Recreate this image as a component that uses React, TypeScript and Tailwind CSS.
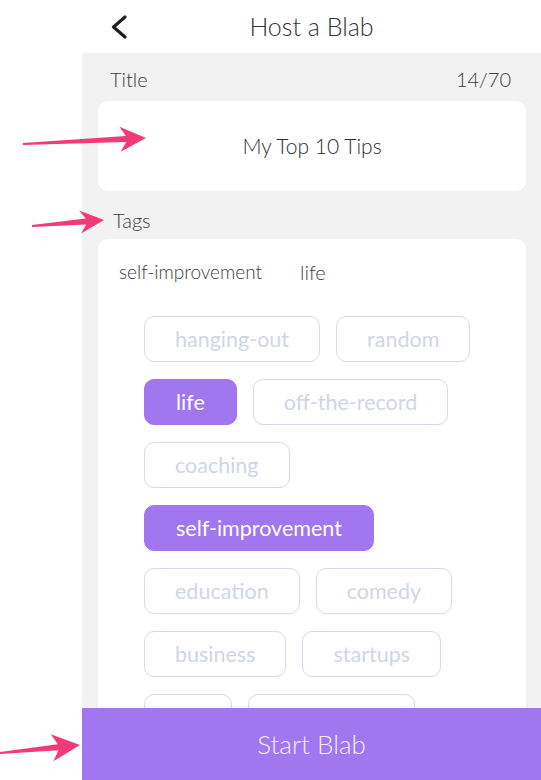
import React from 'react';

const tags = [
  { name: 'hanging-out' },
  { name: 'random' },
  { name: 'life', active: true },
  { name: 'off-the-record' },
  { name: 'coaching' },
  { name: 'self-improvement', active: true },
  { name: 'education' },
  { name: 'comedy' },
  { name: 'business' },
  { name: 'startups' },
  { name: 'art' },
  { name: 'technology' },
];

function Arrows() {
  // pink annotation arrows laid over the screenshot
  const arrow = (x1: number, y1: number, x2: number, y2: number, head: number, half: number) => {
    const len = Math.hypot(x2 - x1, y2 - y1);
    const ux = (x2 - x1) / len;
    const uy = (y2 - y1) / len;
    const px = -uy;
    const py = ux;
    const bx = x2 - ux * head;
    const by = y2 - uy * head;
    const nx = bx + ux * 6;
    const ny = by + uy * 6;
    const pts = [
      [x1 + px * 1, y1 + py * 1],
      [nx + px * 3, ny + py * 3],
      [bx + px * half, by + py * half],
      [x2, y2],
      [bx - px * half, by - py * half],
      [nx - px * 3, ny - py * 3],
      [x1 - px * 1, y1 - py * 1],
    ];
    return pts.map((p) => p.join(',')).join(' ');
  };
  return (
    <svg className="pointer-events-none absolute inset-0" width={541} height={780}>
      <g fill="#f23a78">
        <polygon points={arrow(23, 144, 146, 138, 26, 12.5)} />
        <polygon points={arrow(32, 226, 104, 220, 24, 11.5)} />
        <polygon points={arrow(0, 753, 80, 745, 28, 13.5)} />
      </g>
    </svg>
  );
}

export default function App() {
  return (
    <div className="relative flex h-[780px] w-[541px] overflow-hidden bg-white font-['Lato',sans-serif] text-[#3a3a3a]">
      <div className="w-[82px] shrink-0" />
      <div className="flex min-w-0 flex-1 flex-col">
        <header className="relative flex h-[53px] shrink-0 items-center justify-center bg-white">
          <svg className="absolute left-[26px] top-[15px]" width="21" height="24" viewBox="0 0 21 24">
            <path d="M17 2 L5.5 12 L17 22" fill="none" stroke="#1f1f1f" strokeWidth="3.2" strokeLinecap="round" strokeLinejoin="round" />
          </svg>
          <h1 className="text-[25px] font-light leading-none text-[#333]">Host a Blab</h1>
        </header>

        <div className="min-h-0 flex-1 overflow-hidden bg-[#f2f2f2] pl-4 pr-[15px]">
          <div className="flex h-12 items-center justify-between pl-3 pr-[15px] pt-1 text-[20px] font-light text-[#3c3c3c]">
            <span>Title</span>
            <span>14/70</span>
          </div>
          <div className="flex h-[90px] items-center justify-center rounded-[10px] bg-white text-[21px] font-light text-[#2e2e2e]">
            My Top 10 Tips
          </div>
          <div className="flex h-12 items-center pl-[15px] pt-[10px] text-[20px] font-light text-[#3c3c3c]">Tags</div>
          <div className="rounded-t-[10px] bg-white pt-[22px]">
            <div className="flex h-[22px] items-center pl-[21px] font-light text-[#3c3c3c]">
              <span className="text-[19px]">self-improvement</span>
              <span className="ml-[38px] text-[20px]">life</span>
            </div>
            <div className="mt-[33px] flex flex-wrap gap-x-4 gap-y-[17px] px-[46px] pb-8">
              {tags.map((t) =>
                t.active ? (
                  <span
                    key={t.name}
                    className="flex h-[46px] items-center rounded-[10px] border-[1.5px] border-[#a176ef] bg-[#a176ef] px-[31px] text-[21.5px] text-white"
                  >
                    {t.name}
                  </span>
                ) : (
                  <span
                    key={t.name}
                    className="flex h-[46px] items-center rounded-[10px] border-[1.5px] border-[#d6daea] px-[30px] text-[21.5px] text-[#d1d6e6]"
                  >
                    {t.name}
                  </span>
                )
              )}
            </div>
          </div>
        </div>

        <button className="flex h-[72px] shrink-0 items-center justify-center bg-[#a176ef] text-[26px] font-light text-[#f4eefe]">
          Start Blab
        </button>
      </div>
      <Arrows />
    </div>
  );
}
